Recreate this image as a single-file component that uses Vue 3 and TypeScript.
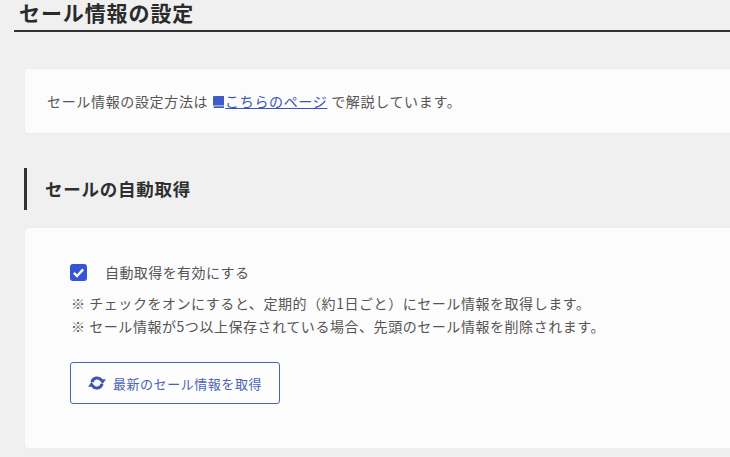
<script setup lang="ts">
const notes: string[] = [
  '※ チェックをオンにすると、定期的（約1日ごと）にセール情報を取得します。',
  '※ セール情報が5つ以上保存されている場合、先頭のセール情報を削除されます。',
]
</script>

<template>
  <div class="page">
    <h1 class="title">セール情報の設定</h1>
    <section class="card intro">
      <p class="intro-text">
        セール情報の設定方法は
        <a class="link" href="#"><svg class="book" viewBox="0 0 12 12" aria-hidden="true"><path d="M1 1.2C1 .5 1.5 0 2.2 0H12v9.4H2.4C1.6 9.4 1 9.8 1 10.4z" /><path d="M1.6 10.9c0-.4.5-.7 1.2-.7H12V12H2.8c-.7 0-1.2-.5-1.2-1.1z" /></svg>こちらのページ</a>
        で解説しています。
      </p>
    </section>
    <h2 class="heading">セールの自動取得</h2>
    <section class="card settings">
      <label class="check-row">
        <span class="check">
          <svg viewBox="0 0 16 16" aria-hidden="true"><path d="M3.6 8.3l3 3 5.8-6.2" fill="none" stroke="#fff" stroke-width="2.2" /></svg>
        </span>
        <span>自動取得を有効にする</span>
      </label>
      <p v-for="n in notes" :key="n" class="note">{{ n }}</p>
      <button class="btn" type="button">
        <svg class="sync" viewBox="0 0 18 14" aria-hidden="true">
          <path d="M4 6.2A5.2 5.2 0 0 1 13.4 4.2" fill="none" stroke="#3d55b5" stroke-width="3" />
          <path d="M14 7.8A5.2 5.2 0 0 1 4.6 9.8" fill="none" stroke="#3d55b5" stroke-width="3" />
          <path d="M11 3.2H18L14.5 8z" />
          <path d="M0 10.8H7L3.5 6z" />
        </svg>
        最新のセール情報を取得
      </button>
    </section>
  </div>
</template>

<style>
html, body { margin: 0; background: #f0f0f0; overflow: hidden; }
</style>

<style scoped>
.page {
  width: 730px;
  height: 457px;
  box-sizing: border-box;
  padding-left: 14px;
  overflow: hidden;
  font-family: "Noto Sans CJK JP", "Noto Sans", sans-serif;
  color: #555;
  background: #f0f0f0;
}
.title {
  margin: 0;
  height: 30px;
  padding-left: 5px;
  border-bottom: 2px solid #333;
  font-size: 21px;
  line-height: 25px;
  font-weight: 700;
  letter-spacing: 0.9px;
  color: #2b2b2b;
  white-space: nowrap;
}
.card {
  margin-left: 11px;
  background: #fcfcfc;
  border-radius: 4px 0 0 4px;
  box-shadow: 0 0 2px rgba(0, 0, 0, 0.06);
}
.intro {
  margin-top: 37px;
  height: 64px;
  display: flex;
  align-items: center;
  padding-left: 22px;
}
.intro-text {
  margin: 0;
  font-size: 14px;
  letter-spacing: 0.66px;
}
.link { color: #3a55b8; }
.book {
  width: 12px;
  height: 12px;
  fill: #3f5bc7;
  vertical-align: -1px;
  margin-right: 1px;
}
.heading {
  margin: 35px 0 0 10px;
  height: 42px;
  padding-left: 18px;
  border-left: 3px solid #333;
  font-size: 17.5px;
  line-height: 42px;
  font-weight: 700;
  letter-spacing: 0.75px;
  color: #2f2f2f;
}
.settings {
  margin-top: 18px;
  height: 220px;
  box-sizing: border-box;
  padding: 35px 0 0 45px;
}
.check-row {
  display: flex;
  align-items: center;
  gap: 18px;
  font-size: 14px;
  letter-spacing: 0.42px;
  line-height: 18px;
  margin-bottom: 11px;
}
.check {
  width: 17px;
  height: 17px;
  border-radius: 3px;
  background: #3553d6;
  display: block;
}
.check svg { width: 17px; height: 17px; display: block; }
.note {
  margin: 0 0 0 1px;
  font-size: 14px;
  line-height: 23px;
  letter-spacing: 0.55px;
  white-space: nowrap;
}
.btn {
  display: flex;
  align-items: center;
  justify-content: center;
  gap: 7px;
  margin-top: 24px;
  width: 210px;
  height: 42px;
  box-sizing: border-box;
  background: #fdfdfd;
  border: 1px solid #4a62b5;
  border-radius: 3px;
  color: #4a62b5;
  font-family: inherit;
  font-size: 13px;
  letter-spacing: 0.55px;
}
.sync { width: 18px; height: 14px; fill: #3d55b5; }
</style>
